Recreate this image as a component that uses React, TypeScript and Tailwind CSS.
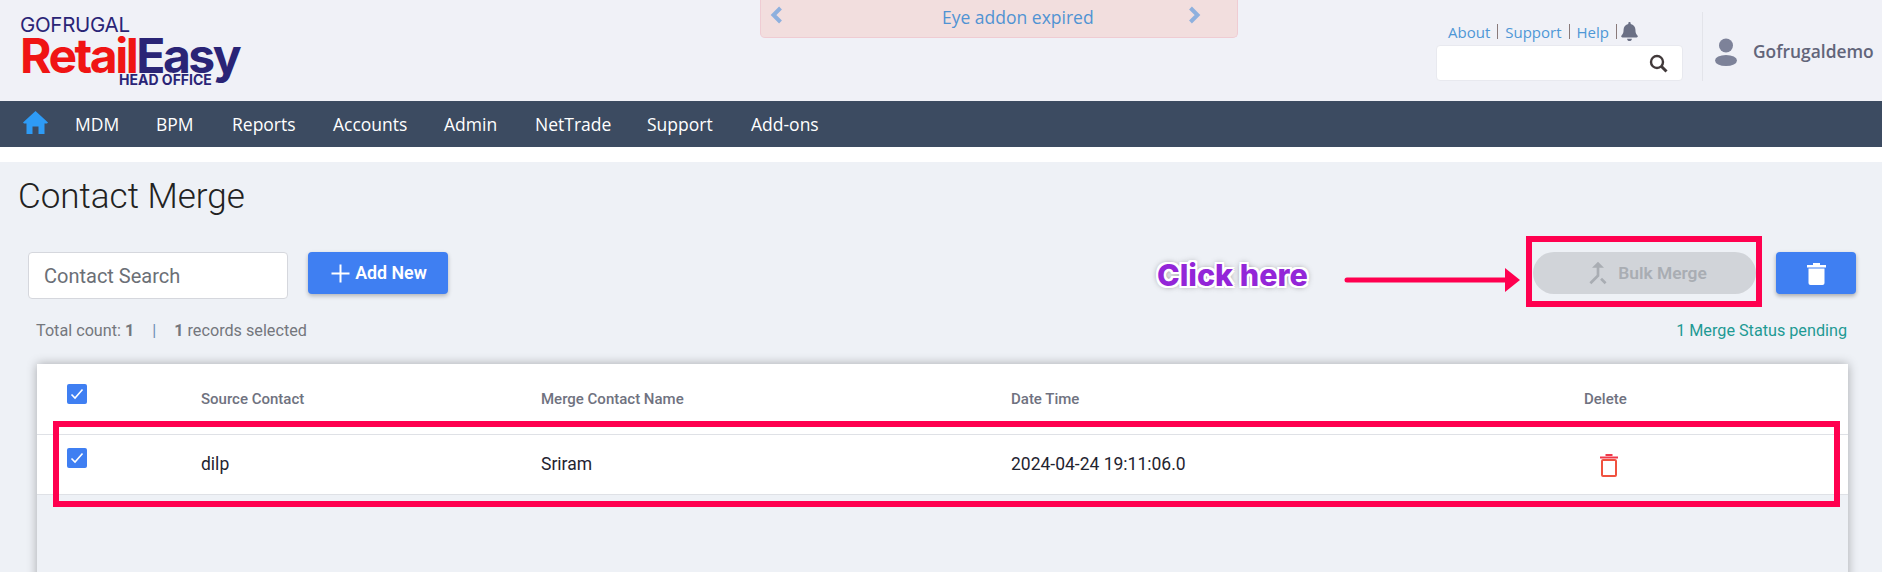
import React from "react";
import { FaBell } from "react-icons/fa";
import { MdCallMerge } from "react-icons/md";

function Check() {
  return (
    <span className="flex h-[20px] w-[20px] items-center justify-center rounded-[2px] bg-[#3f7ff2]">
      <svg width="14" height="12" viewBox="0 0 14 12" fill="none">
        <path d="M1.500 6.500L5 10L12.500 1.500" stroke="#fff" strokeWidth="1.6" />
      </svg>
    </span>
  );
}

function User() {
  return (
    <svg width="22" height="28" viewBox="0 0 22 28" fill="#7d8299">
      <circle cx="11" cy="7.500" r="7" />
      <ellipse cx="11" cy="22.500" rx="11" ry="5.500" />
    </svg>
  );
}

function Chevron({ dir }: { dir: "l" | "r" }) {
  return (
    <svg width="13" height="18" viewBox="0 0 13 18" fill="none" className="mt-[-1px]">
      <path d={dir === "l" ? "M10.500 2L3.500 9L10.500 16" : "M2.500 2L9.500 9L2.500 16"} stroke="#8eb0de" strokeWidth="4" />
    </svg>
  );
}

const navItems = [
  ["MDM", "w-[81px]"],
  ["BPM", "w-[76px]"],
  ["Reports", "w-[101px]"],
  ["Accounts", "w-[111px]"],
  ["Admin", "w-[91px]"],
  ["NetTrade", "w-[112px]"],
  ["Support", "w-[104px]"],
  ["Add-ons", "w-[80px]"],
];

export default function App() {
  return (
    <div className="relative h-[572px] w-[1882px] overflow-hidden bg-[#eef1f6] font-['Roboto',sans-serif]">
      <header className="flex h-[101px] bg-[#f0f1f7]">
        <div className="w-[760px] shrink-0 pl-[20px] pt-[14px] font-['Inter',sans-serif]">
          <div className="text-[20.500px] leading-[22px] tracking-[-0.3px] text-[#2a2476]">GOFRUGAL</div>
          <div className="mt-[-2px] flex text-[48px] font-bold leading-[44px] tracking-[-2.500px]">
            <span className="text-[#f01414]">Retail</span>
            <span className="text-[#2a2476]">Easy</span>
          </div>
          <div className="ml-[99px] mt-[-5px] text-[14px] font-bold leading-[13px] text-[#2a2476]">HEAD OFFICE</div>
        </div>
        <div className="flex h-[38px] w-[478px] shrink-0 items-start rounded-b-[5px] border border-t-0 border-[#efccd3] bg-[#f2dede] pl-[9px] pt-[7px] font-['Open_Sans',sans-serif] text-[17.500px] text-[#5093d3]">
          <Chevron dir="l" />
          <span className="ml-[159px] w-[246px] leading-[20px]">Eye addon expired</span>
          <Chevron dir="r" />
        </div>
        <div className="ml-[198px] w-[247px] shrink-0 pt-[20px] font-['Open_Sans',sans-serif]">
          <div className="flex h-[25px] items-center pl-[12px] text-[15px] text-[#4e97d6]">
            <span>About</span>
            <span className="mx-[7px] mb-[3px] h-[15px] w-px bg-[#8a7a7a]" />
            <span>Support</span>
            <span className="mx-[7px] mb-[3px] h-[15px] w-px bg-[#8a7a7a]" />
            <span>Help</span>
            <span className="mx-[7px] mb-[3px] h-[15px] w-px bg-[#8a7a7a]" />
            <FaBell className="mb-[3px] ml-[-3px] h-[19px] w-[17px] text-[#6b7085]" />
          </div>
          <div className="flex h-[36px] items-center justify-end rounded-[4px] border border-[#e8e9ef] bg-white pr-[14px]">
            <svg width="19" height="19" viewBox="0 0 19 19" fill="none" stroke="#41393a">
              <circle cx="8" cy="8" r="6" strokeWidth="2.400" />
              <path d="M12.500 12.500L17.500 17.500" strokeWidth="3" />
            </svg>
          </div>
        </div>
        <div className="ml-[19px] mt-[12px] flex h-[69px] items-center border-l border-[#e3e4ea] pl-[12px] pt-[10px]">
          <User />
          <span className="ml-[16px] font-['Open_Sans',sans-serif] text-[17.400px] font-semibold text-[#62657a]">Gofrugaldemo</span>
        </div>
      </header>

      <nav className="flex h-[46px] items-center bg-[#3c4b61] pl-[23px] font-['Open_Sans',sans-serif] text-[17.500px] text-white">
        <svg width="25" height="23" viewBox="0 0 25 23" fill="#2e9bf5" className="mb-[3px] mr-[27px]">
          <path d="M12.500 0L25 11.500L24 12.500H21.500V23H15.500V15.500H9.500V23H3.500V12.500H1L0 11.500Z" />
        </svg>
        {navItems.map(([label, w]) => (
          <span key={label} className={w}>{label}</span>
        ))}
      </nav>
      <div className="h-[15px] bg-white" />

      <main>
        <h1 className="pl-[18px] pt-[14px] text-[35px] font-light leading-[42px] text-[#222]">Contact Merge</h1>

        <div className="mt-[34px] flex items-start pl-[28px] pr-[26px]">
          <div className="flex h-[47px] w-[260px] items-center rounded-[4px] border border-[#d5d7dd] bg-white pl-[15px] text-[20px] text-[#6b6f76]">Contact Search</div>
          <button className="ml-[20px] flex h-[42px] w-[140px] items-center justify-center gap-[5px] rounded-[4px] bg-[#3f7ff2] pl-[2px] text-[17.800px] font-semibold text-white shadow-[0_2px_4px_rgba(0,0,0,0.25)]">
            <svg width="19" height="19" viewBox="0 0 19 19" stroke="#fff" strokeWidth="2"><path d="M9.500 0.500V18.500M0.500 9.500H18.500" /></svg>
            Add New
          </button>
          <button className="ml-auto flex h-[42px] w-[223px] items-center justify-center gap-[4px] rounded-[21px] bg-[#d1d4d9] text-[17.400px] font-semibold text-[#a9adb3]">
            <MdCallMerge className="h-[32px] w-[32px]" />
            Bulk Merge
          </button>
          <button className="ml-[20px] flex h-[42px] w-[80px] items-center justify-center rounded-[4px] bg-[#3f7ff2] shadow-[0_2px_4px_rgba(0,0,0,0.3)]">
            <svg width="19" height="23" viewBox="0 0 19 23" fill="#fff">
              <path d="M0 3h19v2.500H0zM6 1h7v2H6z" />
              <path d="M1.500 6.500h16V21a2 2 0 0 1-2 2h-12a2 2 0 0 1-2-2z" />
            </svg>
          </button>
        </div>

        <div className="mt-[19px] flex justify-between pl-[36px] pr-[35px] text-[16.200px] leading-[26px] text-[#74777d]">
          <span>
            Total count: <b className="font-bold">1</b>
            <span className="mx-[18px] text-[#6d8db5]">|</span>
            <b className="font-bold">1</b> records selected
          </span>
          <span className="text-[#1e9a94]">1 Merge Status pending</span>
        </div>

        <section className="mx-[37px] mt-[20px] w-[1811px] shadow-[0_0_10px_rgba(0,0,0,0.3)]">
          <div className="flex h-[71px] border-b border-[#dfe1e6] bg-white text-[15px] font-medium text-[#6f7280]">
            <div className="w-[164px] pl-[30px] pt-[20px]"><Check /></div>
            <div className="w-[340px] pt-[24px]">Source Contact</div>
            <div className="w-[470px] pt-[24px]">Merge Contact Name</div>
            <div className="w-[573px] pt-[24px]">Date Time</div>
            <div className="pt-[24px]">Delete</div>
          </div>
          <div className="flex h-[60px] border-b border-[#dfe1e6] bg-white text-[17.500px] text-[#1f2430]">
            <div className="w-[164px] pl-[30px] pt-[13px]"><Check /></div>
            <div className="w-[340px] pt-[16px]">dilp</div>
            <div className="w-[470px] pt-[16px]">Sriram</div>
            <div className="w-[573px] pt-[16px]">2024-04-24 19:11:06.0</div>
            <div className="pl-[16px] pt-[19px]">
              <svg width="18" height="23" viewBox="0 0 18 23" fill="none">
                <path d="M0 3.500h18" stroke="#f0394a" strokeWidth="2" />
                <path d="M5.500 1h7" stroke="#f0394a" strokeWidth="2" />
                <rect x="2" y="6" width="14" height="16" rx="1" stroke="#f0523f" strokeWidth="2" />
              </svg>
            </div>
          </div>
          <div className="h-[100px]" />
        </section>
      </main>

      <div className="absolute left-[1526px] top-[236px] h-[71px] w-[236px] border-[6px] border-[#ff004f]" />
      <div className="absolute left-[53px] top-[421px] h-[86px] w-[1787px] border-[6px] border-[#ff004f]" />
      <div className="absolute left-[1157px] top-[257px] font-['Inter',sans-serif] text-[30.500px] font-extrabold leading-[36px] text-[#9326d8] [text-shadow:2px_0_0_#fff,-2px_0_0_#fff,0_2px_0_#fff,0_-2px_0_#fff,2px_2px_0_#fff,-2px_-2px_0_#fff,2px_-2px_0_#fff,-2px_2px_0_#fff,0_0_6px_#555]">Click here</div>
      <svg className="absolute left-[1344px] top-[267px]" width="180" height="26" viewBox="0 0 180 26">
        <path d="M3 13H165" stroke="#ff004f" strokeWidth="5" strokeLinecap="round" />
        <path d="M161 1L176 13L161 25z" fill="#ff004f" />
      </svg>
    </div>
  );
}
